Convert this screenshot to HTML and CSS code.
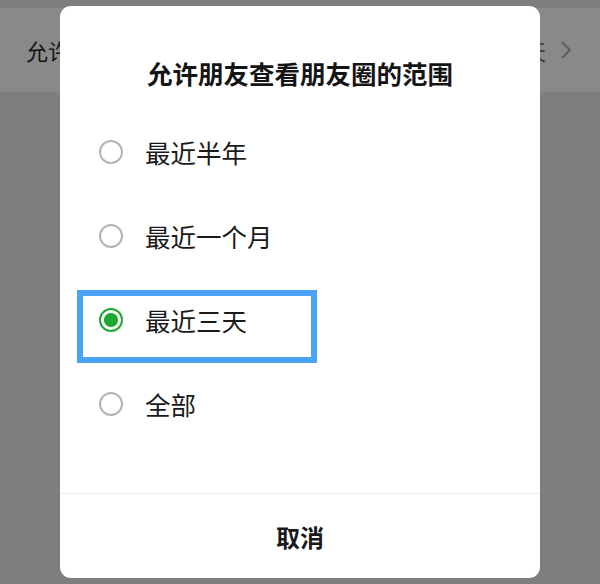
FILE: index.html
```html
<!DOCTYPE html>
<html lang="zh-CN">
<head>
<meta charset="utf-8">
<link rel="stylesheet" href="styles.css">
</head>
<body>
<div class="page">
  <div class="setting-row">
    <span class="setting-label">允许</span>
    <span class="setting-value">最近三天</span>
    <svg class="chevron" width="12" height="20" viewBox="0 0 12 20"><path d="M2 2 L10 10 L2 18" fill="none" stroke="#5c5c5c" stroke-width="1.8"/></svg>
  </div>
</div>
<div class="dialog">
  <div class="dialog-title">允许朋友查看朋友圈的范围</div>
  <ul class="options">
    <li class="option"><span class="radio"></span><span class="option-text">最近半年</span></li>
    <li class="option"><span class="radio"></span><span class="option-text">最近一个月</span></li>
    <li class="option"><span class="radio checked"></span><span class="option-text">最近三天</span></li>
    <li class="option"><span class="radio"></span><span class="option-text">全部</span></li>
  </ul>
  <div class="dialog-footer">取消</div>
  <div class="highlight"></div>
</div>
</body>
</html>
```

FILE: styles.css
```css
html, body {
  margin: 0;
  padding: 0;
}
body {
  width: 600px;
  height: 584px;
  background: #7e7e7e;
  font-family: "Noto Sans CJK SC", "Noto Sans", sans-serif;
  overflow: hidden;
  position: relative;
}
.page {
  padding-top: 8px;
}
.setting-row {
  height: 84px;
  background: #898989;
  display: flex;
  align-items: center;
  padding: 0 28px 0 26px;
  font-size: 22px;
  color: #151515;
}
.setting-label {
  flex: 1;
  white-space: nowrap;
  overflow: hidden;
}
.setting-value {
  color: #3a3a3a;
  margin-right: 14px;
}
.chevron {
  display: block;
}
.dialog {
  position: absolute;
  left: 60px;
  top: 6px;
  width: 480px;
  height: 572px;
  background: #fff;
  border-radius: 11px;
  display: flex;
  flex-direction: column;
}
.dialog-title {
  margin-top: 53px;
  text-align: center;
  font-size: 25.5px;
  line-height: 27px;
  font-weight: 700;
  color: #151515;
}
.options {
  list-style: none;
  margin: 0;
  padding: 0;
  padding-top: 24px;
  flex: 1;
}
.option {
  height: 84px;
  display: flex;
  align-items: center;
  padding-left: 39px;
}
.radio {
  width: 24px;
  height: 24px;
  box-sizing: border-box;
  border: 2px solid #b4b4b4;
  border-radius: 50%;
  margin-right: 22px;
  flex: none;
}
.radio.checked {
  border-color: #1fa831;
  background: radial-gradient(circle, #1fa831 0 6.5px, #fff 7.5px);
}
.option-text {
  font-size: 25.5px;
  color: #1a1a1a;
  line-height: 30px;
}
.dialog-footer {
  height: 84px;
  border-top: 1px solid #ececec;
  display: flex;
  align-items: center;
  justify-content: center;
  font-size: 24px;
  font-weight: 700;
  color: #1a1a1a;
}
.highlight {
  position: absolute;
  left: 17px;
  top: 284px;
  width: 240px;
  height: 73px;
  box-sizing: border-box;
  border: 6px solid #4aa3f5;
}
```
